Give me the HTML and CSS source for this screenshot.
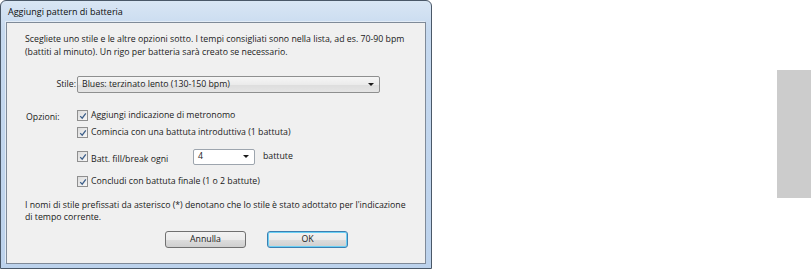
FILE: index.html
```html
<!DOCTYPE html>
<html lang="it">
<head>
<meta charset="utf-8">
<title>Aggiungi pattern di batteria</title>
<link rel="stylesheet" href="styles.css">
</head>
<body>
<div class="window">
  <div class="titlebar">Aggiungi pattern di batteria</div>
  <div class="client">
    <p class="intro">Scegliete uno stile e le altre opzioni sotto. I tempi consigliati sono nella lista, ad es. 70-90 bpm<br>(battiti al minuto). Un rigo per batteria sarà creato se necessario.</p>
    <div class="form">
      <div class="lbl lbl-stile">Stile:</div>
      <div class="select select-wide"><span>Blues: terzinato lento (130-150 bpm)</span><span class="arrow"></span></div>
      <div class="lbl lbl-opz">Opzioni:</div>
      <div class="opts">
        <div class="opt r1"><span class="cb"><svg viewBox="0 0 10 10" width="8" height="8"><path d="M1.5 5.2 L4 7.8 L8.5 1.8" fill="none" stroke="#3d5f8a" stroke-width="1.6"/></svg></span>Aggiungi indicazione di metronomo</div>
        <div class="opt r2"><span class="cb"><svg viewBox="0 0 10 10" width="8" height="8"><path d="M1.5 5.2 L4 7.8 L8.5 1.8" fill="none" stroke="#3d5f8a" stroke-width="1.6"/></svg></span>Comincia con una battuta introduttiva (1 battuta)</div>
        <div class="opt r3"><span class="cb"><svg viewBox="0 0 10 10" width="8" height="8"><path d="M1.5 5.2 L4 7.8 L8.5 1.8" fill="none" stroke="#3d5f8a" stroke-width="1.6"/></svg></span><span class="fill-lbl">Batt. fill/break ogni</span><div class="select select-small"><span>4</span><span class="arrow"></span></div><span class="unit">battute</span></div>
        <div class="opt r4"><span class="cb"><svg viewBox="0 0 10 10" width="8" height="8"><path d="M1.5 5.2 L4 7.8 L8.5 1.8" fill="none" stroke="#3d5f8a" stroke-width="1.6"/></svg></span>Concludi con battuta finale (1 o 2 battute)</div>
      </div>
    </div>
    <p class="note">I nomi di stile prefissati da asterisco (*) denotano che lo stile è stato adottato per l'indicazione<br>di tempo corrente.</p>
    <div class="buttons">
      <div class="btn">Annulla</div>
      <div class="btn btn-default">OK</div>
    </div>
  </div>
</div>
<div class="side"></div>
</body>
</html>
```
FILE: styles.css
```css
html, body {
  margin: 0;
  padding: 0;
  background: #ffffff;
}
body {
  width: 811px;
  height: 270px;
  display: flex;
  justify-content: space-between;
  align-items: flex-start;
  font-family: "Open Sans", "Noto Sans", sans-serif;
  font-size: 8.75px;
  color: #1a1a1a;
  overflow: hidden;
}
.window {
  box-sizing: border-box;
  width: 432px;
  height: 269px;
  border: 1px solid #4a5868;
  border-radius: 6px 6px 0 0;
  background: linear-gradient(180deg, #d9e6f4 0px, #c6d9ef 30px, #bcd2ec 100%);
  display: flex;
  flex-direction: column;
  padding: 0 5px 4px 5px;
}
.titlebar {
  height: 21px;
  line-height: 22px;
  padding-left: 2px;
  font-size: 9px;
  color: #0c0c0c;
}
.client {
  flex: 1;
  border: 1px solid #7f8a98;
  background: #f0f0f0;
  padding: 10px 2px 0 18px;
  box-shadow: -1px -1px 0 #e3ecf6;
  white-space: nowrap;
}
.intro {
  margin: 0;
  line-height: 13px;
}
.form {
  display: grid;
  grid-template-columns: 52px 1fr;
  margin-top: 17px;
  row-gap: 16px;
  align-items: start;
}
.lbl-stile {
  text-align: right;
  padding-right: 1px;
  line-height: 16px;
}
.lbl-opz {
  line-height: 13px;
  padding-left: 1px;
  margin-top: 2px;
}
.select {
  box-sizing: border-box;
  height: 17px;
  border: 1px solid #8e8f8f;
  border-radius: 2px;
  background: linear-gradient(180deg, #f6f6f6 0%, #ebebeb 50%, #dddddd 51%, #e5e5e5 100%);
  display: flex;
  align-items: center;
  justify-content: space-between;
  padding: 0 5px 0 4px;
  line-height: 15px;
}
.select-wide {
  width: 303px;
}
.select-small {
  width: 62px;
  height: 16px;
  background: #ffffff;
  border-color: #9da5ae;
}
.arrow {
  width: 0;
  height: 0;
  border-left: 3px solid transparent;
  border-right: 3px solid transparent;
  border-top: 3px solid #1a1a1a;
}
.opts {
  display: flex;
  flex-direction: column;
}
.opt {
  display: flex;
  align-items: center;
  height: 13px;
  line-height: 13px;
}
.r2 { margin-top: 4px; }
.r3 { margin-top: 9px; height: 17px; }
.r4 { margin-top: 10px; }
.cb {
  width: 9px;
  height: 9px;
  border: 1px solid #8f8f8f;
  background: linear-gradient(135deg, #dcdcdc, #f7f7f7);
  display: inline-flex;
  align-items: center;
  justify-content: center;
  margin-right: 3px;
  flex-shrink: 0;
}
.fill-lbl {
  width: 102px;
  padding-top: 5px;
}
.unit {
  margin-left: 8px;
}
.note {
  margin: 11px 0 0 0;
  line-height: 12px;
}
.buttons {
  display: flex;
  gap: 21px;
  margin-top: 8px;
  padding-left: 140px;
}
.btn {
  box-sizing: border-box;
  width: 81px;
  height: 17px;
  border: 1px solid #707070;
  border-radius: 3px;
  background: linear-gradient(180deg, #f2f2f2 0%, #ebebeb 50%, #dddddd 51%, #cfcfcf 100%);
  text-align: center;
  line-height: 15px;
}
.btn-default {
  border-color: #3c7fb1;
  box-shadow: inset 0 0 0 1px #6ad0f5;
}
.side {
  width: 34px;
  height: 128px;
  margin-top: 70px;
  background: #cccccc;
}
```
